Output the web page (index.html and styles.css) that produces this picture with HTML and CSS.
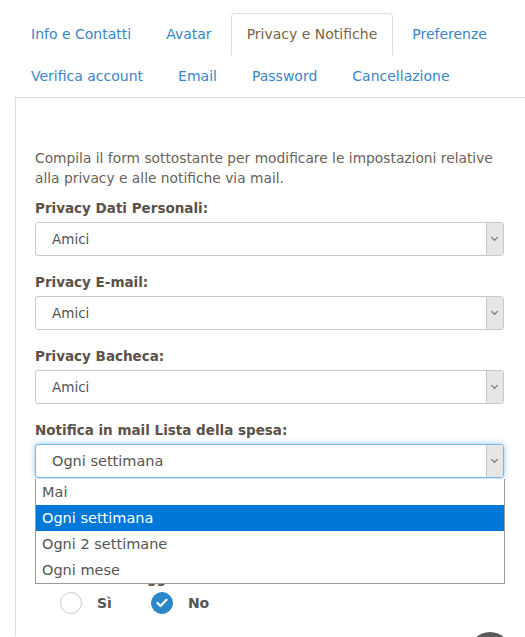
FILE: index.html
```html
<!DOCTYPE html>
<html lang="it">
<head>
    <meta charset="UTF-8">
    <meta name="viewport" content="width=device-width, initial-scale=1.0">
    <title>Privacy e Notifiche</title>
    <link rel="stylesheet" href="styles.css">
</head>
<body>

    <div class="page">
        <ul class="nav-tabs">
            <li><a href="#">Info e Contatti</a></li>
            <li><a href="#">Avatar</a></li>
            <li class="active"><a href="#">Privacy e Notifiche</a></li>
            <li><a href="#">Preferenze</a></li>
            <li><a href="#">Verifica account</a></li>
            <li><a href="#">Email</a></li>
            <li><a href="#">Password</a></li>
            <li><a href="#">Cancellazione</a></li>
        </ul>

        <div class="tab-panel">
            <p class="intro">Compila il form sottostante per modificare le impostazioni relative alla privacy e alle notifiche via mail.</p>

            <div class="field">
                <label>Privacy Dati Personali:</label>
                <div class="select">
                    <span class="value">Amici</span>
                    <span class="arrow"></span>
                </div>
            </div>

            <div class="field">
                <label>Privacy E-mail:</label>
                <div class="select">
                    <span class="value">Amici</span>
                    <span class="arrow"></span>
                </div>
            </div>

            <div class="field">
                <label>Privacy Bacheca:</label>
                <div class="select">
                    <span class="value">Amici</span>
                    <span class="arrow"></span>
                </div>
            </div>

            <div class="field open">
                <label>Notifica in mail Lista della spesa:</label>
                <div class="select focus">
                    <span class="value">Ogni settimana</span>
                    <span class="arrow"></span>
                </div>
                <ul class="options">
                    <li>Mai</li>
                    <li class="selected">Ogni settimana</li>
                    <li>Ogni 2 settimane</li>
                    <li>Ogni mese</li>
                </ul>
            </div>

            <!-- covered by the open list above -->
            <div class="field">
                <label>Notifica in mail Ricette:</label>
                <div class="select">
                    <span class="value">Mai</span>
                    <span class="arrow"></span>
                </div>
            </div>

            <div class="field">
                <label>Notifica messaggi:</label>
                <div class="radios">
                    <span class="radio"></span><span class="radio-label">Sì</span>
                    <span class="radio checked">
                        <svg width="12" height="10" viewBox="0 0 12 10"><path d="M1.5 5 L4.5 8 L10.5 1.8" fill="none" stroke="#fff" stroke-width="2.2" stroke-linecap="round" stroke-linejoin="round"/></svg>
                    </span><span class="radio-label">No</span>
                </div>
            </div>
        </div>
    </div>

    <a class="to-top" href="#"></a>

</body>
</html>
```

FILE: styles.css
```css
body {
    font-family: "DejaVu Sans", Verdana, sans-serif;
    color: #666;
    margin: 0;
    padding: 0;
    background: #fff;
    overflow: hidden;
}

.page {
    padding: 13px 0 0 15px;
}

.nav-tabs {
    list-style: none;
    margin: 0;
    padding: 0;
    display: flex;
    flex-wrap: wrap;
    width: 510px;
}

.nav-tabs li a {
    display: block;
    padding: 10px 15px 10px 15px;
    margin-right: 3px;
    line-height: 21px;
    font-size: 14px;
    color: #3a85c6;
    text-decoration: none;
    border: 1px solid transparent;
    border-bottom: none;
    border-radius: 4px 4px 0 0;
}

.nav-tabs li.active a {
    color: #7a6446;
    border-color: #ddd;
}

.tab-panel {
    border-top: 1px solid #ddd;
    border-left: 1px solid #ddd;
    padding: 50px 21px 4px 19px;
}

.intro {
    margin: 0 0 12px 0;
    font-size: 13.8px;
    line-height: 20px;
    color: #6a6258;
}

.field {
    position: relative;
    margin-bottom: 18px;
}

.field label {
    display: block;
    font-weight: bold;
    font-size: 13.5px;
    color: #5b5249;
    margin-bottom: 6px;
}

.select {
    display: flex;
    height: 32px;
    border: 1px solid #c8c8c8;
    border-radius: 3px;
    background: #fff;
}

.select .value {
    flex: 1;
    padding-left: 16px;
    line-height: 32px;
    font-size: 13.5px;
    color: #555;
}

.select .arrow {
    width: 16px;
    background: #e6e6e6;
    border-left: 1px solid #c8c8c8;
    position: relative;
}

.select .arrow::after {
    content: "";
    position: absolute;
    left: 5px;
    top: 12px;
    width: 4px;
    height: 4px;
    border-right: 1px solid #666;
    border-bottom: 1px solid #666;
    transform: rotate(45deg);
}

.select.focus {
    border-color: #7ab6e4;
    box-shadow: 0 0 6px rgba(102, 175, 233, 0.7);
}

.select.focus .value {
    font-size: 14.5px;
}

.options {
    position: absolute;
    left: 0;
    right: -1px;
    top: 57px;
    z-index: 5;
    list-style: none;
    margin: 0;
    padding: 0;
    background: #fff;
    border: 1px solid #9a9a9a;
    border-top: none;
}

.options li {
    height: 26px;
    line-height: 26px;
    padding-left: 6px;
    font-size: 14.5px;
    color: #555;
}

.options li.selected {
    background: #0078d7;
    color: #fff;
}

.radios {
    display: flex;
    align-items: center;
    padding-left: 25px;
}

.radio {
    width: 20px;
    height: 20px;
    border: 1px solid #ccc;
    border-radius: 50%;
    display: flex;
    align-items: center;
    justify-content: center;
}

.radio.checked {
    background: #2b88c8;
    border-color: #2b88c8;
}

.radio-label {
    font-weight: bold;
    font-size: 14px;
    color: #555;
    margin: 0 39px 0 15px;
}

.to-top {
    position: fixed;
    right: 14px;
    bottom: -37px;
    width: 42px;
    height: 42px;
    border-radius: 50%;
    background: #5a5a5a;
}
```
